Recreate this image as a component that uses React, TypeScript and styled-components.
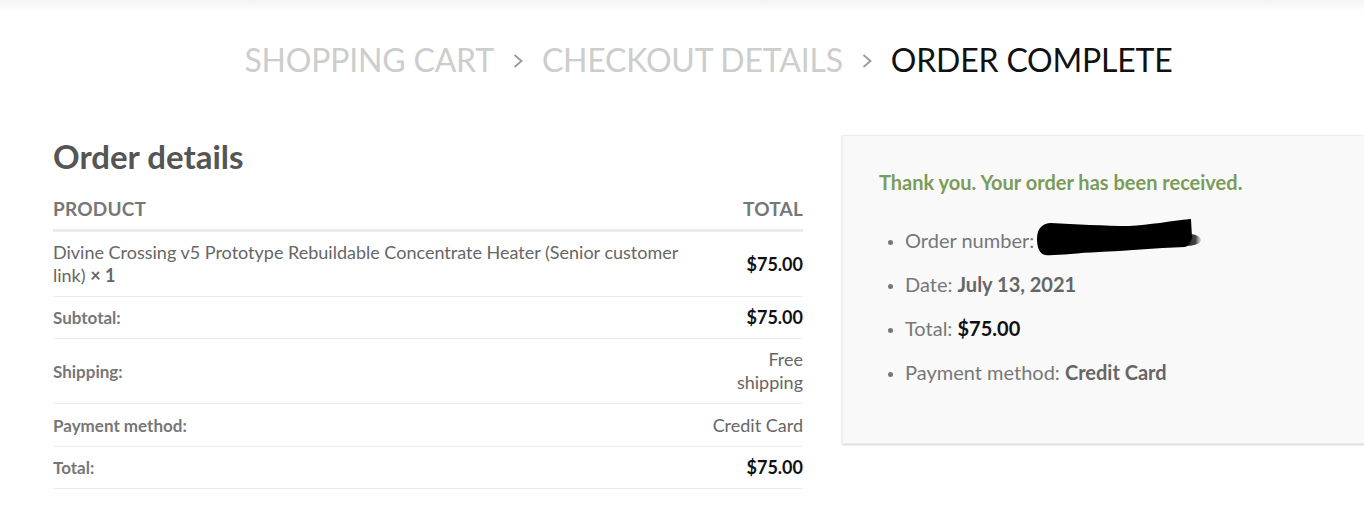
import React from "react";
import styled, { createGlobalStyle } from "styled-components";

const Global = createGlobalStyle`
  html, body { margin: 0; padding: 0; background: #fff; }
  body { font-family: Lato, "Open Sans", sans-serif; overflow: hidden; }
  * { box-sizing: border-box; }
`;

const Page = styled.div`
  width: 1364px;
  height: 513px;
  overflow: hidden;
`;

const TopShade = styled.div`
  height: 12px;
  background: linear-gradient(to bottom, rgba(0,0,0,0.045), rgba(0,0,0,0));
`;

const Container = styled.div`
  padding-left: 53px;
  width: 1364px;
`;

const Crumbs = styled.nav`
  display: flex;
  justify-content: center;
  align-items: center;
  gap: 18px;
  height: 72px;
  padding-top: 24px;
  font-size: 32px;
  text-transform: uppercase;
`;

const Crumb = styled.span<{ $active?: boolean }>`
  color: ${(p) => (p.$active ? "#111" : "#cdcdcd")};
  font-weight: 400;
  letter-spacing: -0.2px;
  line-height: 1;
`;

const Chevron = styled.svg`
  width: 12px;
  height: 16px;
  flex: none;
  margin-top: 2px;
`;

const Columns = styled.div`
  display: flex;
  gap: 39px;
  margin-top: 51px;
`;

const Left = styled.section`
  width: 750px;
  flex: none;
`;

const Heading = styled.h2`
  margin: 0;
  font-size: 33px;
  font-weight: 700;
  color: #555;
  line-height: 1;
  padding-top: 5px;
  padding-bottom: 24px;
`;

const Table = styled.table`
  width: 100%;
  border-collapse: collapse;
  color: #666;
  font-size: 18px;
`;

const Th = styled.th<{ $right?: boolean }>`
  text-align: ${(p) => (p.$right ? "right" : "left")};
  text-transform: uppercase;
  font-weight: 700;
  color: #777;
  font-size: 19px;
  padding: 0 0 9px;
  border-bottom: 3px solid #ececec;
  letter-spacing: 0.2px;
`;

const Td = styled.td<{ $right?: boolean; $h: number }>`
  text-align: ${(p) => (p.$right ? "right" : "left")};
  border-bottom: 1px solid #ececec;
  height: ${(p) => p.$h}px;
  width: ${(p) => (p.$right ? "96px" : "auto")};
  padding: 0;
  line-height: 23px;
  vertical-align: middle;
`;

const Label = styled.span`
  font-size: 17px;
  font-weight: 700;
  color: #777;
`;

const Price = styled.strong`
  color: #111;
  font-weight: 700;
  font-size: 18px;
`;

const Qty = styled.strong`
  font-weight: 700;
  color: #666;
`;

const Box = styled.aside`
  width: 560px;
  flex: none;
  height: 309px;
  background: #f9f9f9;
  border: 1px solid #ececec;
  box-shadow: 0 1px 2px rgba(0, 0, 0, 0.18);
  padding: 35px 36px;
`;

const Thanks = styled.p`
  margin: 0;
  color: #7a9c59;
  font-weight: 700;
  font-size: 20px;
  line-height: 23px;
`;

const List = styled.ul`
  margin: 35px 0 0;
  padding: 0 0 0 26px;
  color: #777;
  font-size: 20px;
`;

const Item = styled.li`
  line-height: 23px;
  margin-bottom: 21px;
  &::marker { color: #777; font-size: 15px; }
`;

const Strong = styled.strong<{ $dark?: boolean }>`
  font-weight: 700;
  color: ${(p) => (p.$dark ? "#111" : "#666")};
`;

const Redact = styled.svg`
  width: 170px;
  height: 16px;
  overflow: visible;
  vertical-align: -2px;
  margin-left: 1px;
`;

const Sep = () => (
  <Chevron viewBox="0 0 12 16">
    <path d="M2.5 2 L9.5 8 L2.5 14" fill="none" stroke="#999" strokeWidth="1.8" />
  </Chevron>
);

export default function App() {
  return (
    <Page>
      <Global />
      <TopShade />
      <Container>
        <Crumbs>
          <Crumb>Shopping Cart</Crumb>
          <Sep />
          <Crumb>Checkout details</Crumb>
          <Sep />
          <Crumb $active>Order Complete</Crumb>
        </Crumbs>
        <Columns>
          <Left>
            <Heading>Order details</Heading>
            <Table>
              <thead>
                <tr>
                  <Th>Product</Th>
                  <Th $right>Total</Th>
                </tr>
              </thead>
              <tbody>
                <tr>
                  <Td $h={66}>
                    Divine Crossing v5 Prototype Rebuildable Concentrate Heater (Senior customer link) <Qty>× 1</Qty>
                  </Td>
                  <Td $right $h={66}>
                    <Price>$75.00</Price>
                  </Td>
                </tr>
                <tr>
                  <Td $h={42}><Label>Subtotal:</Label></Td>
                  <Td $right $h={42}><Price>$75.00</Price></Td>
                </tr>
                <tr>
                  <Td $h={65}><Label>Shipping:</Label></Td>
                  <Td $right $h={65}>Free<br />shipping</Td>
                </tr>
                <tr>
                  <Td $h={43}><Label>Payment method:</Label></Td>
                  <Td $right $h={43}>Credit Card</Td>
                </tr>
                <tr>
                  <Td $h={42}><Label>Total:</Label></Td>
                  <Td $right $h={42}><Price>$75.00</Price></Td>
                </tr>
              </tbody>
            </Table>
          </Left>
          <Box>
            <Thanks>Thank you. Your order has been received.</Thanks>
            <List>
              <Item>
                Order number:
                <Redact viewBox="0 0 170 16">
                  <defs>
                    <linearGradient id="smudge" x1="0" x2="1" y1="0" y2="0">
                      <stop offset="0" stopColor="#111" />
                      <stop offset="0.7" stopColor="#444" />
                      <stop offset="1" stopColor="#888" stopOpacity="0.3" />
                    </linearGradient>
                  </defs>
                  <path
                    d="M148 0 C158 -1 166 2 166 6 C166 10 158 12 148 12 Z"
                    fill="url(#smudge)"
                  />
                  <path
                    d="M2 5 C2 -6 8 -11 16 -11 C40 -10 70 -8 94 -8 C115 -9 135 -13 156 -15 L157 4 C155 8 154 12 150 13 C120 14 90 17 64 18 C40 19 20 22 10 21 C4 20 2 12 2 5 Z"
                    fill="#000"
                  />
                </Redact>
              </Item>
              <Item>
                Date: <Strong>July 13, 2021</Strong>
              </Item>
              <Item>
                Total: <Strong $dark>$75.00</Strong>
              </Item>
              <Item>
                Payment method: <Strong>Credit Card</Strong>
              </Item>
            </List>
          </Box>
        </Columns>
      </Container>
    </Page>
  );
}
